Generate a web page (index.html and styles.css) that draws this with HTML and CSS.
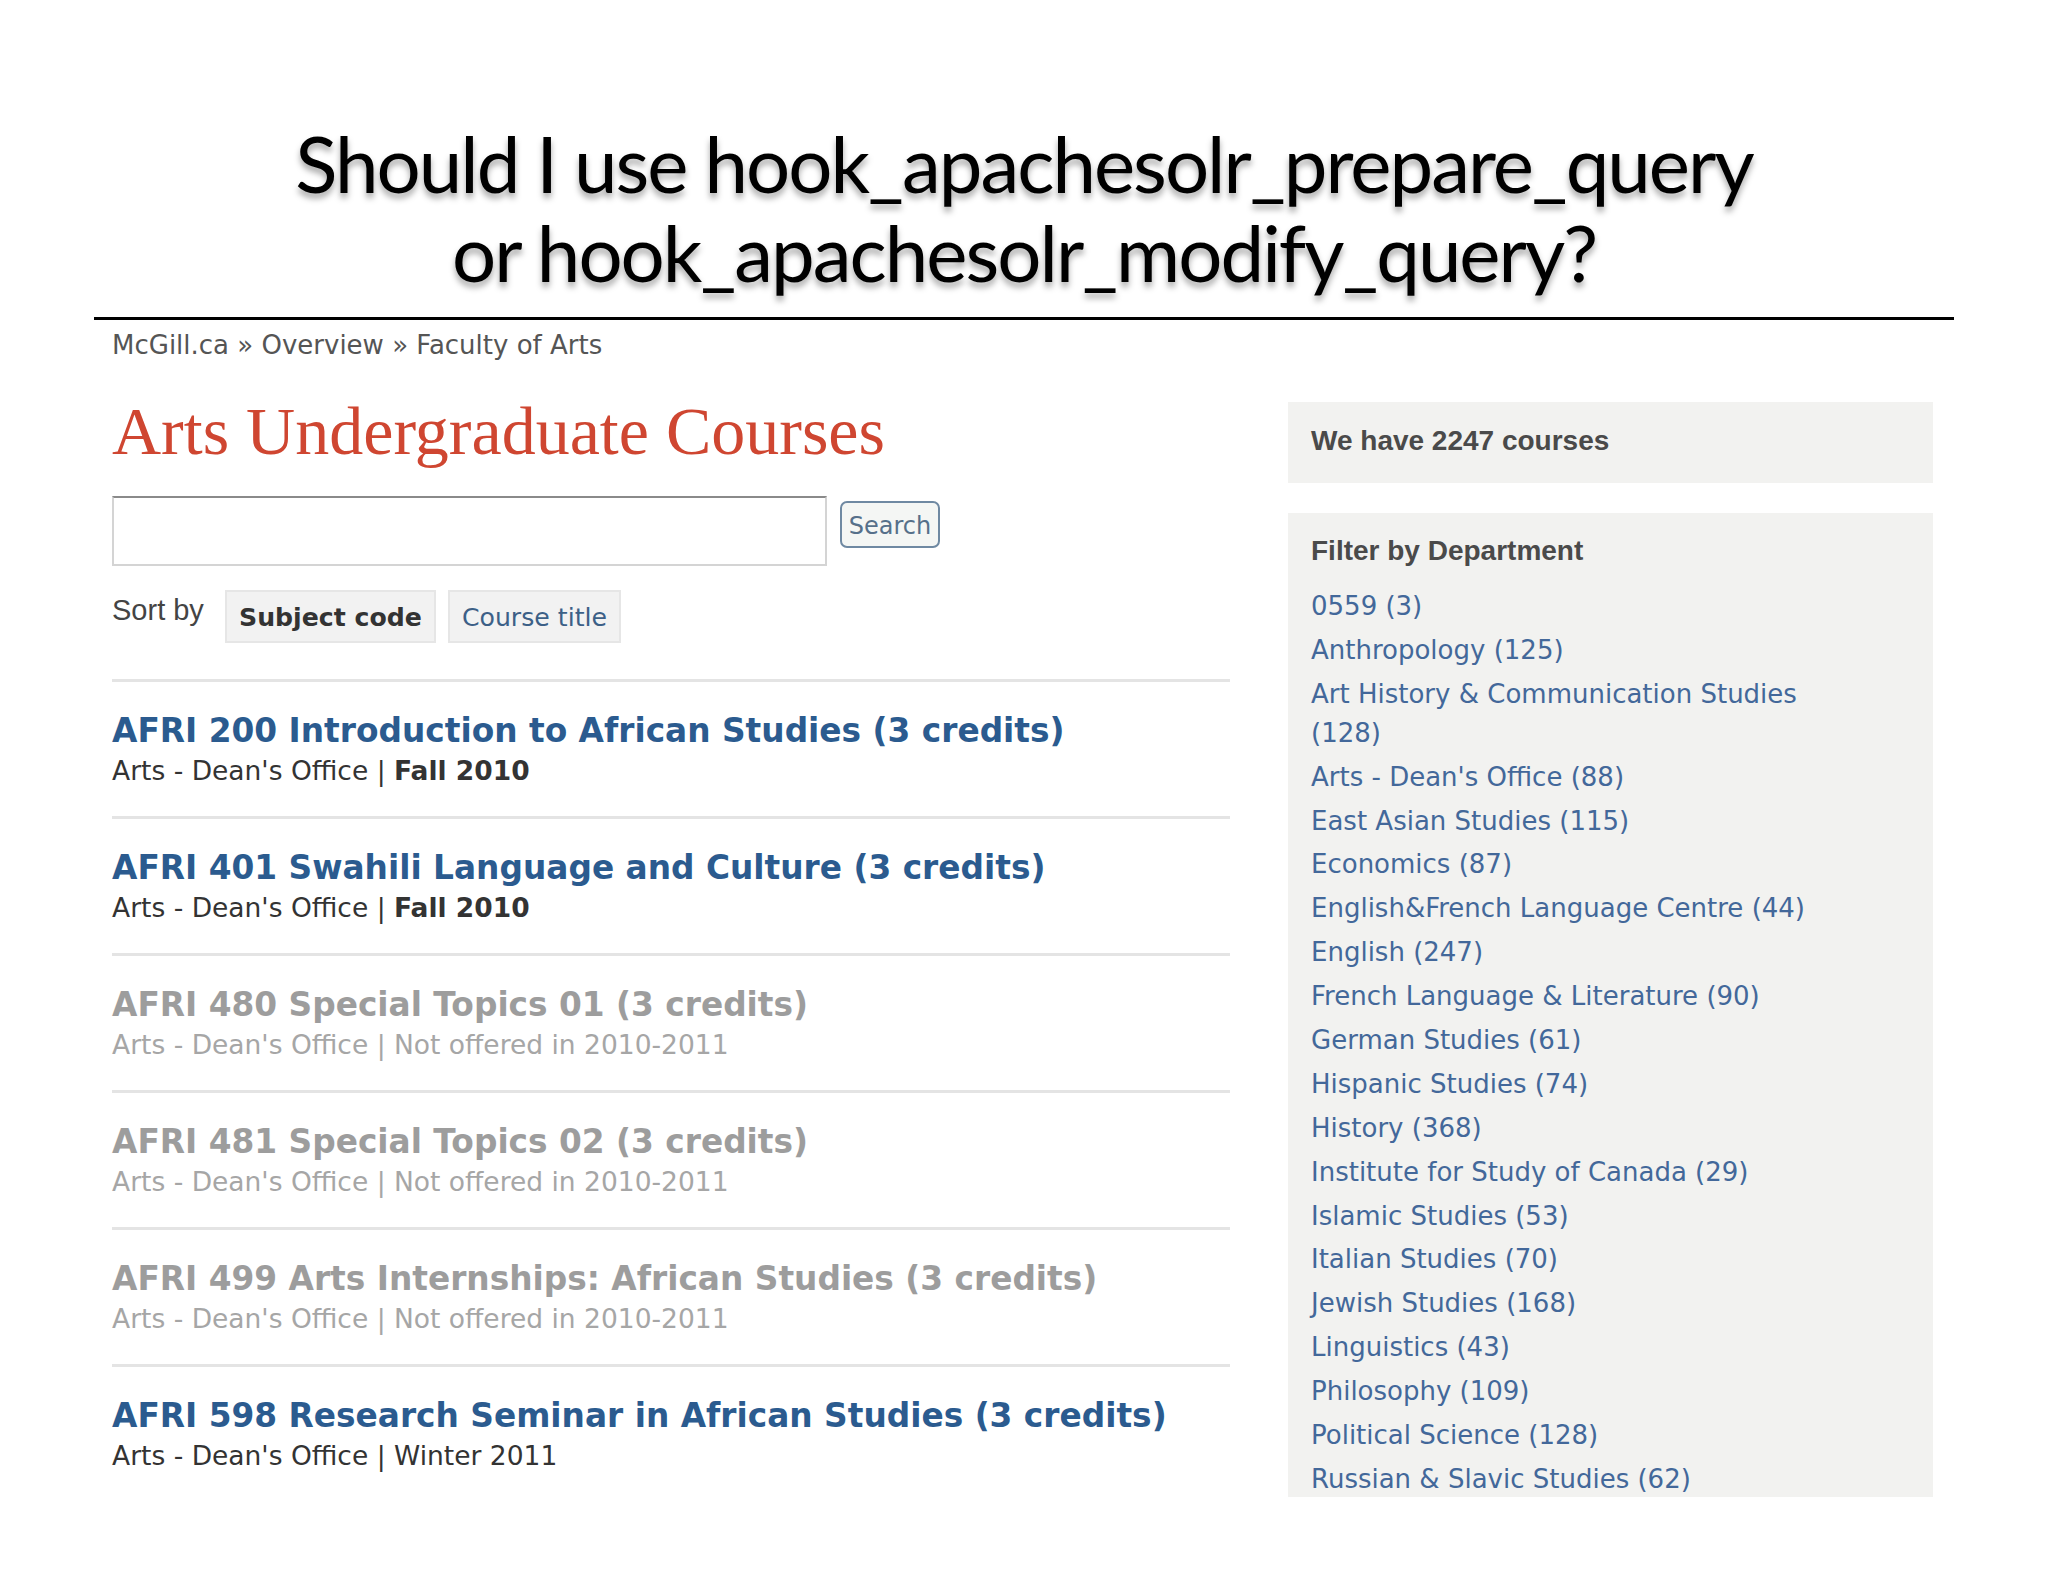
FILE: index.html
```html
<!DOCTYPE html>
<html>
<head>
<meta charset="utf-8">
<link rel="stylesheet" href="styles.css">
</head>
<body>
<div class="slide">
  <h1 class="slide-title">Should I use hook_apachesolr_prepare_query<br>or hook_apachesolr_modify_query?</h1>
  <div class="rule"></div>
  <div class="page">
    <div class="main">
      <div class="crumbs">McGill.ca » Overview » Faculty of Arts</div>
      <h2 class="heading">Arts Undergraduate Courses</h2>
      <div class="search-row">
        <div class="search-input"></div>
        <div class="search-btn">Search</div>
      </div>
      <div class="sort-row">
        <span class="sort-label">Sort by</span>
        <span class="sort-btn active">Subject code</span>
        <span class="sort-btn">Course title</span>
      </div>
      <div class="courses">
        <div class="course">
          <div class="c-title">AFRI 200 Introduction to African Studies (3 credits)</div>
          <div class="c-meta">Arts - Dean's Office | <b>Fall 2010</b></div>
        </div>
        <div class="course">
          <div class="c-title">AFRI 401 Swahili Language and Culture (3 credits)</div>
          <div class="c-meta">Arts - Dean's Office | <b>Fall 2010</b></div>
        </div>
        <div class="course off">
          <div class="c-title">AFRI 480 Special Topics 01 (3 credits)</div>
          <div class="c-meta">Arts - Dean's Office | Not offered in 2010-2011</div>
        </div>
        <div class="course off">
          <div class="c-title">AFRI 481 Special Topics 02 (3 credits)</div>
          <div class="c-meta">Arts - Dean's Office | Not offered in 2010-2011</div>
        </div>
        <div class="course off">
          <div class="c-title">AFRI 499 Arts Internships: African Studies (3 credits)</div>
          <div class="c-meta">Arts - Dean's Office | Not offered in 2010-2011</div>
        </div>
        <div class="course">
          <div class="c-title">AFRI 598 Research Seminar in African Studies (3 credits)</div>
          <div class="c-meta">Arts - Dean's Office | Winter 2011</div>
        </div>
      </div>
    </div>
    <div class="side">
      <div class="box count">We have 2247 courses</div>
      <div class="box filter">
        <div class="f-head">Filter by Department</div>
        <ul class="f-list">
          <li>0559 (3)</li>
          <li>Anthropology (125)</li>
          <li>Art History &amp; Communication Studies (128)</li>
          <li>Arts - Dean's Office (88)</li>
          <li>East Asian Studies (115)</li>
          <li>Economics (87)</li>
          <li>English&amp;French Language Centre (44)</li>
          <li>English (247)</li>
          <li>French Language &amp; Literature (90)</li>
          <li>German Studies (61)</li>
          <li>Hispanic Studies (74)</li>
          <li>History (368)</li>
          <li>Institute for Study of Canada (29)</li>
          <li>Islamic Studies (53)</li>
          <li>Italian Studies (70)</li>
          <li>Jewish Studies (168)</li>
          <li>Linguistics (43)</li>
          <li>Philosophy (109)</li>
          <li>Political Science (128)</li>
          <li>Russian &amp; Slavic Studies (62)</li>
        </ul>
      </div>
    </div>
  </div>
</div>
</body>
</html>
```
FILE: styles.css
```css
html, body {
  margin: 0;
  padding: 0;
  background: #ffffff;
}
.slide {
  width: 2048px;
  height: 1582px;
  overflow: hidden;
}
.slide-title {
  margin: 0;
  padding-top: 119px;
  text-align: center;
  font-family: Lato, "Open Sans", sans-serif;
  font-weight: 400;
  font-size: 78px;
  line-height: 89px;
  letter-spacing: -2px;
  color: #000;
  text-shadow: 0 5px 6px rgba(0,0,0,0.35);
}
.rule {
  margin: 20px 94px 0;
  height: 3px;
  background: #000;
}
.page {
  display: flex;
  padding-left: 112px;
  gap: 58px;
}
.main {
  width: 1118px;
}
.crumbs {
  margin-top: 7px;
  font-family: "DejaVu Sans", Verdana, sans-serif;
  font-size: 26px;
  line-height: 36px;
  color: #555;
}
.heading {
  margin: 32px 0 0;
  font-family: "Liberation Serif", Georgia, serif;
  font-weight: 400;
  font-size: 68px;
  line-height: 72px;
  color: #cf4631;
}
.search-row {
  display: flex;
  align-items: flex-start;
  gap: 13px;
  margin-top: 29px;
}
.search-input {
  width: 711px;
  height: 66px;
  border: 2px solid #d4d4d4;
  border-top-color: #8a8a8a;
  background: #fff;
}
.search-btn {
  margin-top: 5px;
  box-sizing: border-box;
  width: 100px;
  height: 47px;
  border: 2px solid #6f89a2;
  border-radius: 7px;
  background: #f4f6f4;
  font-family: "DejaVu Sans", Verdana, sans-serif;
  font-size: 24px;
  line-height: 46px;
  text-align: center;
  color: #56708a;
}
.sort-row {
  display: flex;
  align-items: flex-start;
  margin-top: 24px;
}
.sort-label {
  width: 113px;
  font-family: "Liberation Sans", Arial, sans-serif;
  font-size: 29px;
  line-height: 40px;
  color: #444;
}
.sort-btn {
  box-sizing: border-box;
  height: 53px;
  padding: 0 12px;
  margin-right: 12px;
  border: 2px solid #e6e6e6;
  background: #f2f2f2;
  font-family: "DejaVu Sans", Verdana, sans-serif;
  font-size: 25.2px;
  line-height: 51px;
  color: #3c6087;
}
.sort-btn.active {
  font-weight: 700;
  color: #333;
}
.courses {
  margin-top: 36px;
}
.course {
  border-top: 3px solid #e4e4e4;
  padding: 31px 0 29px;
}
.c-title {
  font-family: "DejaVu Sans", Verdana, sans-serif;
  font-weight: 700;
  font-size: 32.8px;
  line-height: 37px;
  color: #2b5b8f;
  white-space: nowrap;
}
.c-meta {
  margin-top: 5px;
  font-family: "DejaVu Sans", Verdana, sans-serif;
  font-size: 26.5px;
  line-height: 32px;
  color: #333;
}
.course.off .c-title {
  color: #9d9d9d;
}
.course.off .c-meta {
  color: #a6a6a6;
}
.side {
  width: 645px;
  padding-top: 82px;
}
.box {
  background: #f2f2f0;
  box-sizing: border-box;
}
.count {
  height: 81px;
  padding: 21px 23px 0;
  font-family: "Liberation Sans", Arial, sans-serif;
  font-weight: 700;
  font-size: 28px;
  line-height: 36px;
  color: #4a4a4a;
}
.filter {
  margin-top: 30px;
  height: 984px;
  overflow: hidden;
  padding: 20px 23px 0;
}
.f-head {
  font-family: "Liberation Sans", Arial, sans-serif;
  font-weight: 700;
  font-size: 28px;
  line-height: 36px;
  color: #4a4a4a;
}
.f-list {
  list-style: none;
  margin: 18px 0 0;
  padding: 0;
  width: 530px;
}
.f-list li {
  font-family: "DejaVu Sans", Verdana, sans-serif;
  font-size: 26px;
  line-height: 39px;
  margin-bottom: 4.9px;
  color: #43689a;
}
```
